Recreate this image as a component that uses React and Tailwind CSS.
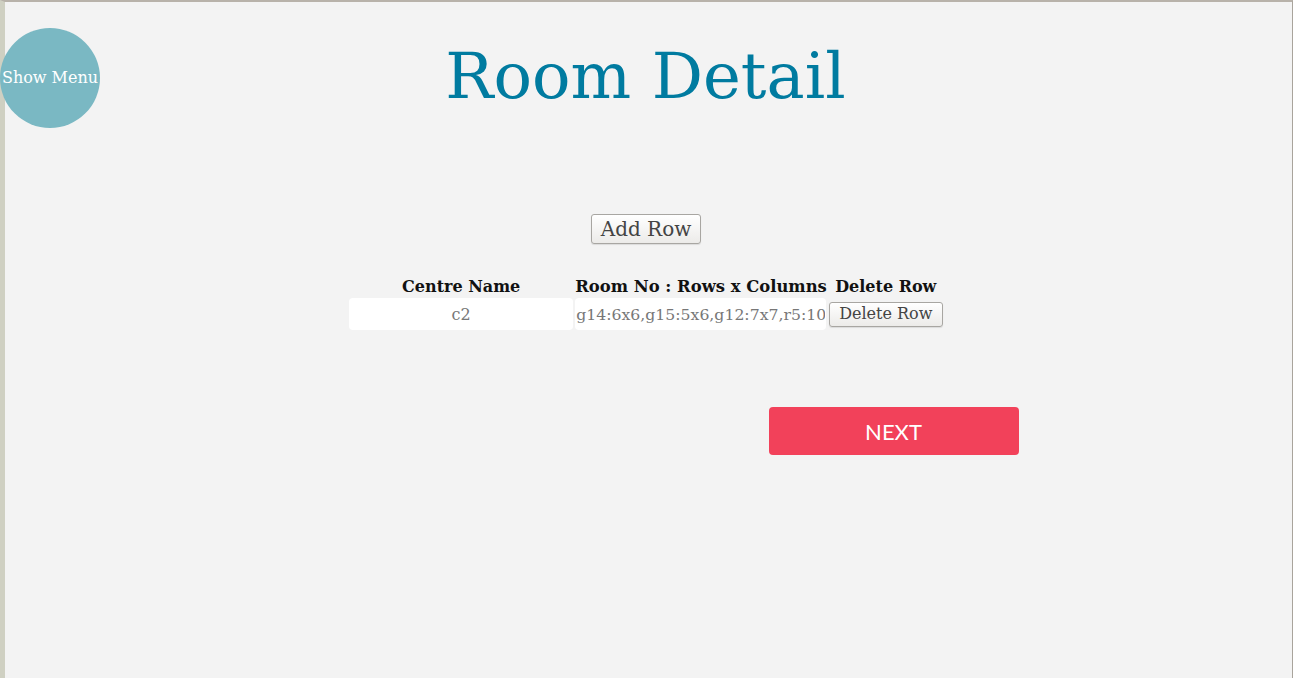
import React, { useState } from "react"

const serif = "font-['DejaVu_Serif',serif]"

function App() {
  const [rows, setRows] = useState([
    { centre: "c2", rooms: "g14:6x6,g15:5x6,g12:7x7,r5:10" },
  ])

  const btn =
    "bg-gradient-to-b from-white to-[#ecebe9] border border-[#a8a6a2] rounded-[3px] text-[#444] shadow-[0_1px_1px_rgba(0,0,0,0.1)]"

  return (
    <div className={`min-h-screen bg-[#f3f3f3] ${serif} border-t-2 border-t-[#b8b2aa] border-l-[5px] border-l-[#cfd0c2] border-r border-r-[#a9a49c]`}>
      <div className="relative">
        <button className="absolute left-[-5px] top-[26px] w-[100px] h-[100px] rounded-full bg-[#7ab8c3] text-white text-[16px] flex items-center justify-center">
          Show Menu
        </button>
        <h1 className="text-center text-[64px] text-[#007ba0] leading-none pt-[42px] pr-[6px]">
          Room Detail
        </h1>
      </div>

      <div className="flex justify-center mt-[106px]">
        <button
          className={`${btn} text-[20px] px-[9px] h-[30px] leading-none ml-[-5px]`}
          onClick={() => setRows([...rows, { centre: "", rooms: "" }])}
        >
          Add Row
        </button>
      </div>

      <div className="flex justify-center mt-[30px] ml-[-5px]">
        <table className="border-separate border-spacing-[2px]">
          <thead>
            <tr className="text-[16px] font-bold text-[#111] leading-[20px] translate-y-[1px]">
              <th className="px-0">Centre Name</th>
              <th className="px-0 text-[16.4px]">Room No : Rows x Columns</th>
              <th className="px-0">Delete Row</th>
            </tr>
          </thead>
          <tbody>
            {rows.map((r, i) => (
              <tr key={i}>
                <td>
                  <input
                    className="w-[224px] h-[32px] bg-white rounded-[4px] text-center text-[16px] text-[#777] outline-none"
                    value={r.centre}
                    onChange={() => {}}
                  />
                </td>
                <td>
                  <input
                    className="w-[251px] h-[32px] bg-white rounded-[4px] text-[15.7px] text-[#777] px-[1px] outline-none"
                    value={r.rooms}
                    onChange={() => {}}
                  />
                </td>
                <td>
                  <button
                    className={`${btn} text-[16px] h-[25px] w-[114px] leading-none`}
                    onClick={() => setRows(rows.filter((_, j) => j !== i))}
                  >
                    Delete Row
                  </button>
                </td>
              </tr>
            ))}
          </tbody>
        </table>
      </div>

      <div className="flex justify-center mt-[75px] pl-[490px]">
        <button className="w-[250px] h-[48px] bg-[#f2415a] rounded-[4px] text-white text-[22px] font-['Lato',sans-serif]">
          NEXT
        </button>
      </div>
    </div>
  )
}

export default App
